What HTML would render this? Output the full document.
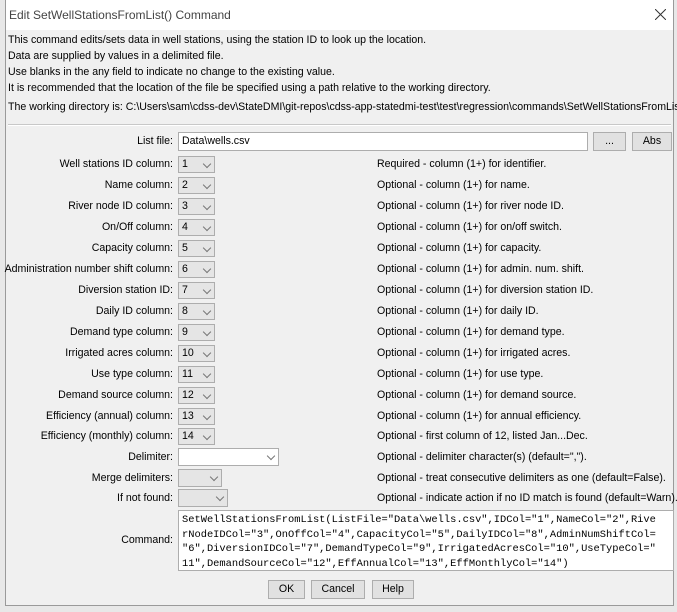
<!DOCTYPE html>
<html><head><style>
body{margin:0;width:677px;height:612px;background:#e8e8e8;position:relative;overflow:hidden;font-family:"Liberation Sans",sans-serif;font-size:10.6px;color:#000}
.win{position:absolute;left:5px;top:0;width:669px;height:606px;background:#f0f0f0;border:1px solid #9a9a9a;border-top:none;box-sizing:border-box}
.title{position:absolute;left:0;top:0;width:100%;height:30px;background:#fff}
.t{position:absolute;white-space:nowrap}
.lab{position:absolute;right:500px;white-space:nowrap;text-align:right}
.cb{position:absolute;left:172px;width:37px;height:17px;background:#e5e5e5;border:1px solid #adadad;box-sizing:border-box}
.cb span{position:absolute;left:3px;top:1px}
.ar{position:absolute;right:4px;top:4px;width:5px;height:5px;border-right:1px solid #777;border-bottom:1px solid #777;transform:rotate(45deg)}
.btn{position:absolute;height:19px;background:#e1e1e1;border:1px solid #adadad;box-sizing:border-box;text-align:center;line-height:17px}
</style></head><body>
<div class="win">
<div class="title"><div class="t" style="left:3px;top:8px;font-size:12px;color:#444">Edit SetWellStationsFromList() Command</div>
<svg style="position:absolute;left:649px;top:9px" width="11" height="11"><path d="M0 0L11 11M11 0L0 11" stroke="#333" stroke-width="1"/></svg></div>
<div class="t" style="left:2px;top:34px">This command edits/sets data in well stations, using the station ID to look up the location.</div>
<div class="t" style="left:2px;top:50px">Data are supplied by values in a delimited file.</div>
<div class="t" style="left:2px;top:66px">Use blanks in the any field to indicate no change to the existing value.</div>
<div class="t" style="left:2px;top:82px">It is recommended that the location of the file be specified using a path relative to the working directory.</div>
<div class="t" style="left:2px;top:101px">The working directory is: C:\Users\sam\cdss-dev\StateDMI\git-repos\cdss-app-statedmi-test\test\regression\commands\SetWellStationsFromList</div>
<div style="position:absolute;left:2px;top:124px;width:663px;border-top:1px solid #c8c8c8;border-bottom:1px solid #fff"></div>
<div class="lab" style="top:135px">List file:</div>
<div style="position:absolute;left:172px;top:132px;width:410px;height:19px;background:#fff;border:1px solid #adadad;box-sizing:border-box"><span style="position:absolute;left:3px;top:2px">Data\wells.csv</span></div>
<div class="btn" style="left:587px;top:132px;width:33px">...</div>
<div class="btn" style="left:626px;top:132px;width:40px">Abs</div>

<div class="lab" style="top:158px">Well stations ID column:</div><div class="cb" style="top:156px"><span>1</span><i class="ar"></i></div><div class="t" style="left:371px;top:158px">Required - column (1+) for identifier.</div>
<div class="lab" style="top:179px">Name column:</div><div class="cb" style="top:177px"><span>2</span><i class="ar"></i></div><div class="t" style="left:371px;top:179px">Optional - column (1+) for name.</div>
<div class="lab" style="top:200px">River node ID column:</div><div class="cb" style="top:198px"><span>3</span><i class="ar"></i></div><div class="t" style="left:371px;top:200px">Optional - column (1+) for river node ID.</div>
<div class="lab" style="top:221px">On/Off column:</div><div class="cb" style="top:219px"><span>4</span><i class="ar"></i></div><div class="t" style="left:371px;top:221px">Optional - column (1+) for on/off switch.</div>
<div class="lab" style="top:242px">Capacity column:</div><div class="cb" style="top:240px"><span>5</span><i class="ar"></i></div><div class="t" style="left:371px;top:242px">Optional - column (1+) for capacity.</div>
<div class="lab" style="top:263px">Administration number shift column:</div><div class="cb" style="top:261px"><span>6</span><i class="ar"></i></div><div class="t" style="left:371px;top:263px">Optional - column (1+) for admin. num. shift.</div>
<div class="lab" style="top:284px">Diversion station ID:</div><div class="cb" style="top:282px"><span>7</span><i class="ar"></i></div><div class="t" style="left:371px;top:284px">Optional - column (1+) for diversion station ID.</div>
<div class="lab" style="top:305px">Daily ID column:</div><div class="cb" style="top:303px"><span>8</span><i class="ar"></i></div><div class="t" style="left:371px;top:305px">Optional - column (1+) for daily ID.</div>
<div class="lab" style="top:326px">Demand type column:</div><div class="cb" style="top:324px"><span>9</span><i class="ar"></i></div><div class="t" style="left:371px;top:326px">Optional - column (1+) for demand type.</div>
<div class="lab" style="top:347px">Irrigated acres column:</div><div class="cb" style="top:345px"><span>10</span><i class="ar"></i></div><div class="t" style="left:371px;top:347px">Optional - column (1+) for irrigated acres.</div>
<div class="lab" style="top:368px">Use type column:</div><div class="cb" style="top:366px"><span>11</span><i class="ar"></i></div><div class="t" style="left:371px;top:368px">Optional - column (1+) for use type.</div>
<div class="lab" style="top:389px">Demand source column:</div><div class="cb" style="top:387px"><span>12</span><i class="ar"></i></div><div class="t" style="left:371px;top:389px">Optional - column (1+) for demand source.</div>
<div class="lab" style="top:410px">Efficiency (annual) column:</div><div class="cb" style="top:408px"><span>13</span><i class="ar"></i></div><div class="t" style="left:371px;top:410px">Optional - column (1+) for annual efficiency.</div>
<div class="lab" style="top:430px">Efficiency (monthly) column:</div><div class="cb" style="top:428px"><span>14</span><i class="ar"></i></div><div class="t" style="left:371px;top:430px">Optional - first column of 12, listed Jan...Dec.</div>
<div class="lab" style="top:451px">Delimiter:</div><div class="cb" style="top:448px;width:101px;height:18px;background:#fff"><i class="ar"></i></div><div class="t" style="left:371px;top:451px">Optional - delimiter character(s) (default=",").</div>
<div class="lab" style="top:472px">Merge delimiters:</div><div class="cb" style="top:469px;width:44px;height:18px"><i class="ar"></i></div><div class="t" style="left:371px;top:472px">Optional - treat consecutive delimiters as one (default=False).</div>
<div class="lab" style="top:492px">If not found:</div><div class="cb" style="top:489px;width:50px;height:18px"><i class="ar"></i></div><div class="t" style="left:371px;top:492px">Optional - indicate action if no ID match is found (default=Warn).</div>
<div class="lab" style="top:534px">Command:</div>
<div style="position:absolute;left:172px;top:510px;width:496px;height:61px;background:#fff;border:1px solid #adadad;box-sizing:border-box;font-family:'Liberation Mono',monospace;font-size:10.4px;line-height:14.6px;padding:2px 0 0 3px;white-space:pre;overflow:hidden">SetWellStationsFromList(ListFile="Data\wells.csv",IDCol="1",NameCol="2",Rive
rNodeIDCol="3",OnOffCol="4",CapacityCol="5",DailyIDCol="8",AdminNumShiftCol=
"6",DiversionIDCol="7",DemandTypeCol="9",IrrigatedAcresCol="10",UseTypeCol="
11",DemandSourceCol="12",EffAnnualCol="13",EffMonthlyCol="14")</div>
<div class="btn" style="left:262px;top:580px;width:37px">OK</div>
<div class="btn" style="left:305px;top:580px;width:54px">Cancel</div>
<div class="btn" style="left:366px;top:580px;width:42px">Help</div>
</div>
</body></html>
